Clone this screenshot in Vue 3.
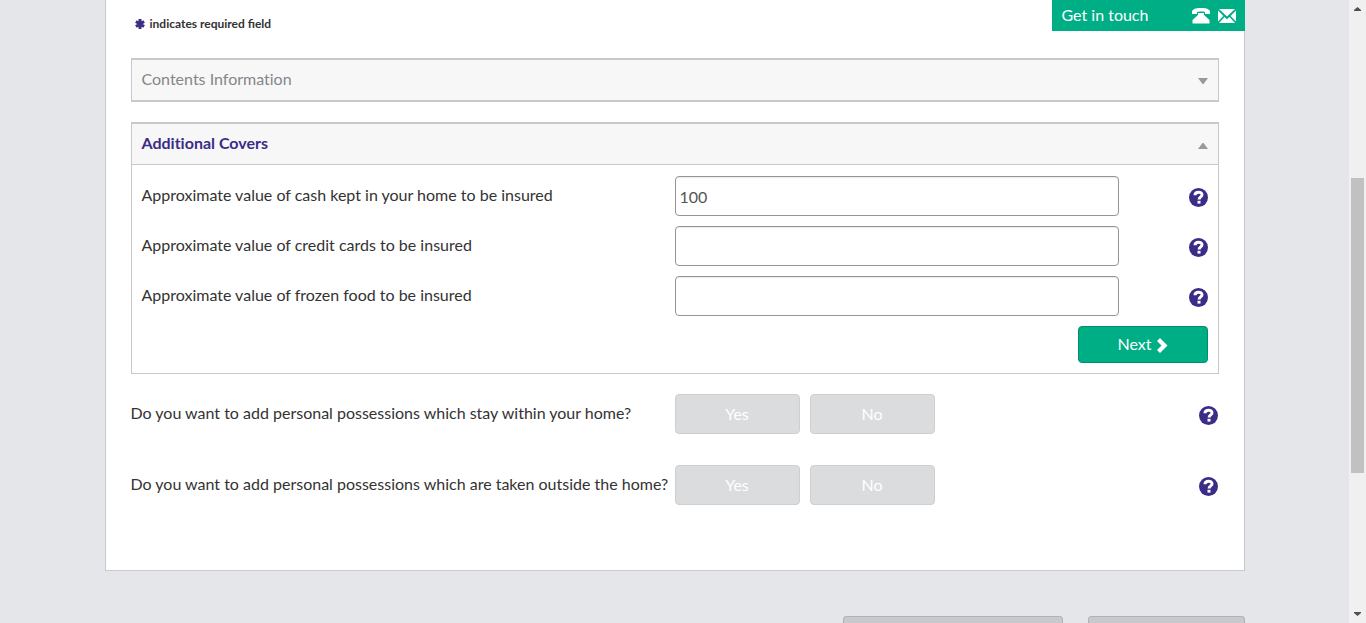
<script setup>
import { ref, reactive } from 'vue'

const covers = reactive([
  { id: 'cash', label: 'Approximate value of cash kept in your home to be insured', value: '100' },
  { id: 'cards', label: 'Approximate value of credit cards to be insured', value: '' },
  { id: 'frozen', label: 'Approximate value of frozen food to be insured', value: '' },
])

const questions = [
  { id: 'inside', label: 'Do you want to add personal possessions which stay within your home?' },
  { id: 'outside', label: 'Do you want to add personal possessions which are taken outside the home?' },
]

const open = ref(true)
</script>

<template>
  <div class="window">
    <div class="page">
      <div class="container">
        <main class="sheet">
          <div class="touch">
            <span>Get in touch</span>
            <a href="#phone" aria-label="Phone us">
              <svg width="18" height="16" viewBox="0 0 18 16" aria-hidden="true">
                <path fill="#fff" d="M0 6V4C0 1.500 3 0 9 0s9 1.500 9 4v2h-5V4.200C11.500 3.400 6.500 3.400 5 4.200V6z" />
                <path fill="#fff" d="M6 5h6v2l5.500 5v3.500H.5V12L6 7z" />
              </svg>
            </a>
            <a href="#email" aria-label="Email us">
              <svg width="18" height="14" viewBox="0 0 18 14" aria-hidden="true">
                <path fill="#fff" d="M1 0h16L9 7.500zM0 1.500 5.400 7 0 12.500zM18 1.500v11L12.600 7zM6.500 8 9 10.200 11.500 8 17 14H1z" />
              </svg>
            </a>
          </div>

          <p class="required">
            <svg width="10" height="10" viewBox="0 0 10 10" aria-hidden="true">
              <path stroke="#3a2c87" stroke-width="3" d="M5 0v10M.9 2.500l8.200 5M.9 7.500l8.200-5" />
            </svg>
            <span>indicates required field</span>
          </p>

          <section class="panel closed">
            <button type="button" class="head">
              <span>Contents Information</span>
              <svg width="10" height="6" viewBox="0 0 10 6" aria-hidden="true"><path fill="#999" d="M0 0h10L5.500 6h-1z" /></svg>
            </button>
          </section>

          <section class="panel">
            <button type="button" class="head active" :aria-expanded="open" @click="open = !open">
              <span>Additional Covers</span>
              <svg width="10" height="6" viewBox="0 0 10 6" aria-hidden="true"><path fill="#999" d="M0 6h10L5.500 0h-1z" /></svg>
            </button>
            <form v-show="open" class="body" @submit.prevent>
              <div v-for="c in covers" :key="c.id" class="row">
                <label :for="c.id">{{ c.label }}</label>
                <input :id="c.id" v-model="c.value" type="text">
                <button type="button" class="help" aria-label="Help">
                  <svg width="19" height="19" viewBox="0 0 19 19" aria-hidden="true">
                    <circle cx="9.500" cy="9.500" r="9.500" fill="#3a2c87" />
                    <path fill="none" stroke="#fff" stroke-width="3" d="M6 7.200C6 3.200 13 3.400 13 6.800c0 2.200-2.900 2-2.900 4.700" />
                    <path fill="#fff" d="M8.500 12.800h3v2.800h-3z" />
                  </svg>
                </button>
              </div>
              <div class="actions">
                <button type="submit" class="next">
                  <span>Next</span>
                  <svg width="11" height="15" viewBox="0 0 11 15" aria-hidden="true"><path fill="#fff" d="m3 0 7.500 7.500L3 15l-3-3 4.500-4.500L0 3z" /></svg>
                </button>
              </div>
            </form>
          </section>

          <div v-for="q in questions" :key="q.id" class="row question" role="group" :aria-labelledby="q.id">
            <span :id="q.id" class="text">{{ q.label }}</span>
            <div class="choices">
              <button type="button">Yes</button>
              <button type="button">No</button>
            </div>
            <button type="button" class="help" aria-label="Help">
              <svg width="19" height="19" viewBox="0 0 19 19" aria-hidden="true">
                <circle cx="9.500" cy="9.500" r="9.500" fill="#3a2c87" />
                <path fill="none" stroke="#fff" stroke-width="3" d="M6 7.200C6 3.200 13 3.400 13 6.800c0 2.200-2.900 2-2.900 4.700" />
                <path fill="#fff" d="M8.500 12.800h3v2.800h-3z" />
              </svg>
            </button>
          </div>
        </main>

        <div class="footer">
          <button type="button" class="wide" aria-label="Save"></button>
          <button type="button" class="narrow" aria-label="Continue"></button>
        </div>
      </div>
    </div>

    <div class="scroll" aria-hidden="true">
      <svg width="17" height="17" viewBox="0 0 17 17"><path fill="#505050" d="M5 11h7v-1L8.500 7 5 10z" /></svg>
      <div class="before"></div>
      <div class="thumb"></div>
      <div class="after"></div>
      <svg width="17" height="17" viewBox="0 0 17 17"><path fill="#505050" d="M5 6h7v1l-3.500 3L5 7z" /></svg>
    </div>
  </div>
</template>

<style>
body {
  background: #e5e6ea;
}
</style>

<style scoped>
.window {
  display: flex;
  height: 100vh;
  overflow: hidden;
  background: #e5e6ea;
  color: #333;
  font: 16px/22px Lato, "Liberation Sans", sans-serif;
  font-variant-ligatures: no-common-ligatures;
}

.window *,
.window *::before {
  box-sizing: border-box;
}

button,
input {
  font: inherit;
  font-variant-ligatures: inherit;
  margin: 0;
}

svg {
  display: block;
  flex: none;
}

.page {
  flex: 1;
  min-width: 0;
}

.container {
  max-width: 1140px;
  margin: 0 auto;
}

.sheet {
  position: relative;
  padding: 14px 25px 65px;
  background: #fff;
  border: 1px solid #c8c9ce;
  border-top: 0;
}

.touch {
  position: absolute;
  top: 0;
  right: -1px;
  display: flex;
  align-items: center;
  gap: 8px;
  width: 193px;
  height: 31px;
  padding: 0 9px 0 10px;
  background: #00ae86;
  color: #fff;
}

.touch span {
  flex: 1;
  padding-bottom: 2px;
}

.required {
  display: flex;
  align-items: center;
  gap: 5px;
  margin: 0 0 24px;
  padding-left: 4px;
  font-size: 12px;
  line-height: 20px;
  font-weight: 700;
  font-variant-ligatures: normal;
}

.panel {
  border: 1px solid #c8c9ce;
  border-top-width: 2px;
  margin-bottom: 20px;
}

.panel.closed {
  border-bottom-width: 2px;
}

.head {
  display: flex;
  align-items: center;
  justify-content: space-between;
  width: 100%;
  height: 40px;
  padding: 0 10px;
  border: 0;
  background: #f7f7f7;
  color: #85868b;
  text-align: left;
}

.head span {
  padding-bottom: 2px;
}

.head svg {
  margin-top: 2px;
}

.head.active {
  height: 41px;
  border-bottom: 1px solid #c8c9ce;
  color: #3a2c87;
  font-weight: 700;
}

.head.active svg {
  margin-top: 4px;
}

.body {
  padding: 11px 10px 10px;
}

.row {
  display: grid;
  grid-template-columns: 6fr 5fr 1fr;
  align-items: center;
  margin-bottom: 10px;
}

.row label,
.row .text {
  padding-bottom: 2px;
  white-space: nowrap;
}

.row input {
  width: 100%;
  height: 40px;
  padding: 0 4px;
  border: 1px solid #939598;
  border-radius: 4px;
  background: #fff;
  box-shadow: inset 0 1px 1px rgba(0, 0, 0, 0.08);
  color: #555;
}

.help {
  justify-self: end;
  padding: 2px 0 0;
  border: 0;
  background: none;
}

.actions {
  display: flex;
  justify-content: flex-end;
}

.next {
  display: flex;
  align-items: center;
  justify-content: center;
  gap: 5px;
  width: 130px;
  height: 37px;
  padding: 0;
  border: 1px solid #008f6d;
  border-radius: 4px;
  background: #00ae86;
  color: #fff;
}

.next span {
  padding-bottom: 2px;
}

.next svg {
  margin-top: 2px;
}

.question {
  margin-bottom: 31px;
}

.question:last-child {
  margin-bottom: 0;
}

.choices {
  display: flex;
  gap: 10px;
}

.choices button {
  width: 125px;
  height: 40px;
  padding: 0;
  border: 1px solid #cecfd1;
  border-radius: 4px;
  background: #dbdcde;
  color: #fff;
}

.footer {
  display: flex;
  justify-content: flex-end;
  gap: 25px;
  margin-top: 45px;
}

.footer button {
  height: 40px;
  border: 1px solid #b1b2b6;
  border-radius: 3px;
  background: #c8c9cd;
}

.wide {
  width: 220px;
}

.narrow {
  width: 157px;
}

.scroll {
  display: flex;
  flex-direction: column;
  flex: none;
  width: 17px;
  padding: 0;
  background: #f0f0f0;
}

.before {
  flex: 161;
}

.thumb {
  flex: 295;
  margin: 0 2px;
  background: #c1c1c1;
}

.after {
  flex: 133;
}
</style>
